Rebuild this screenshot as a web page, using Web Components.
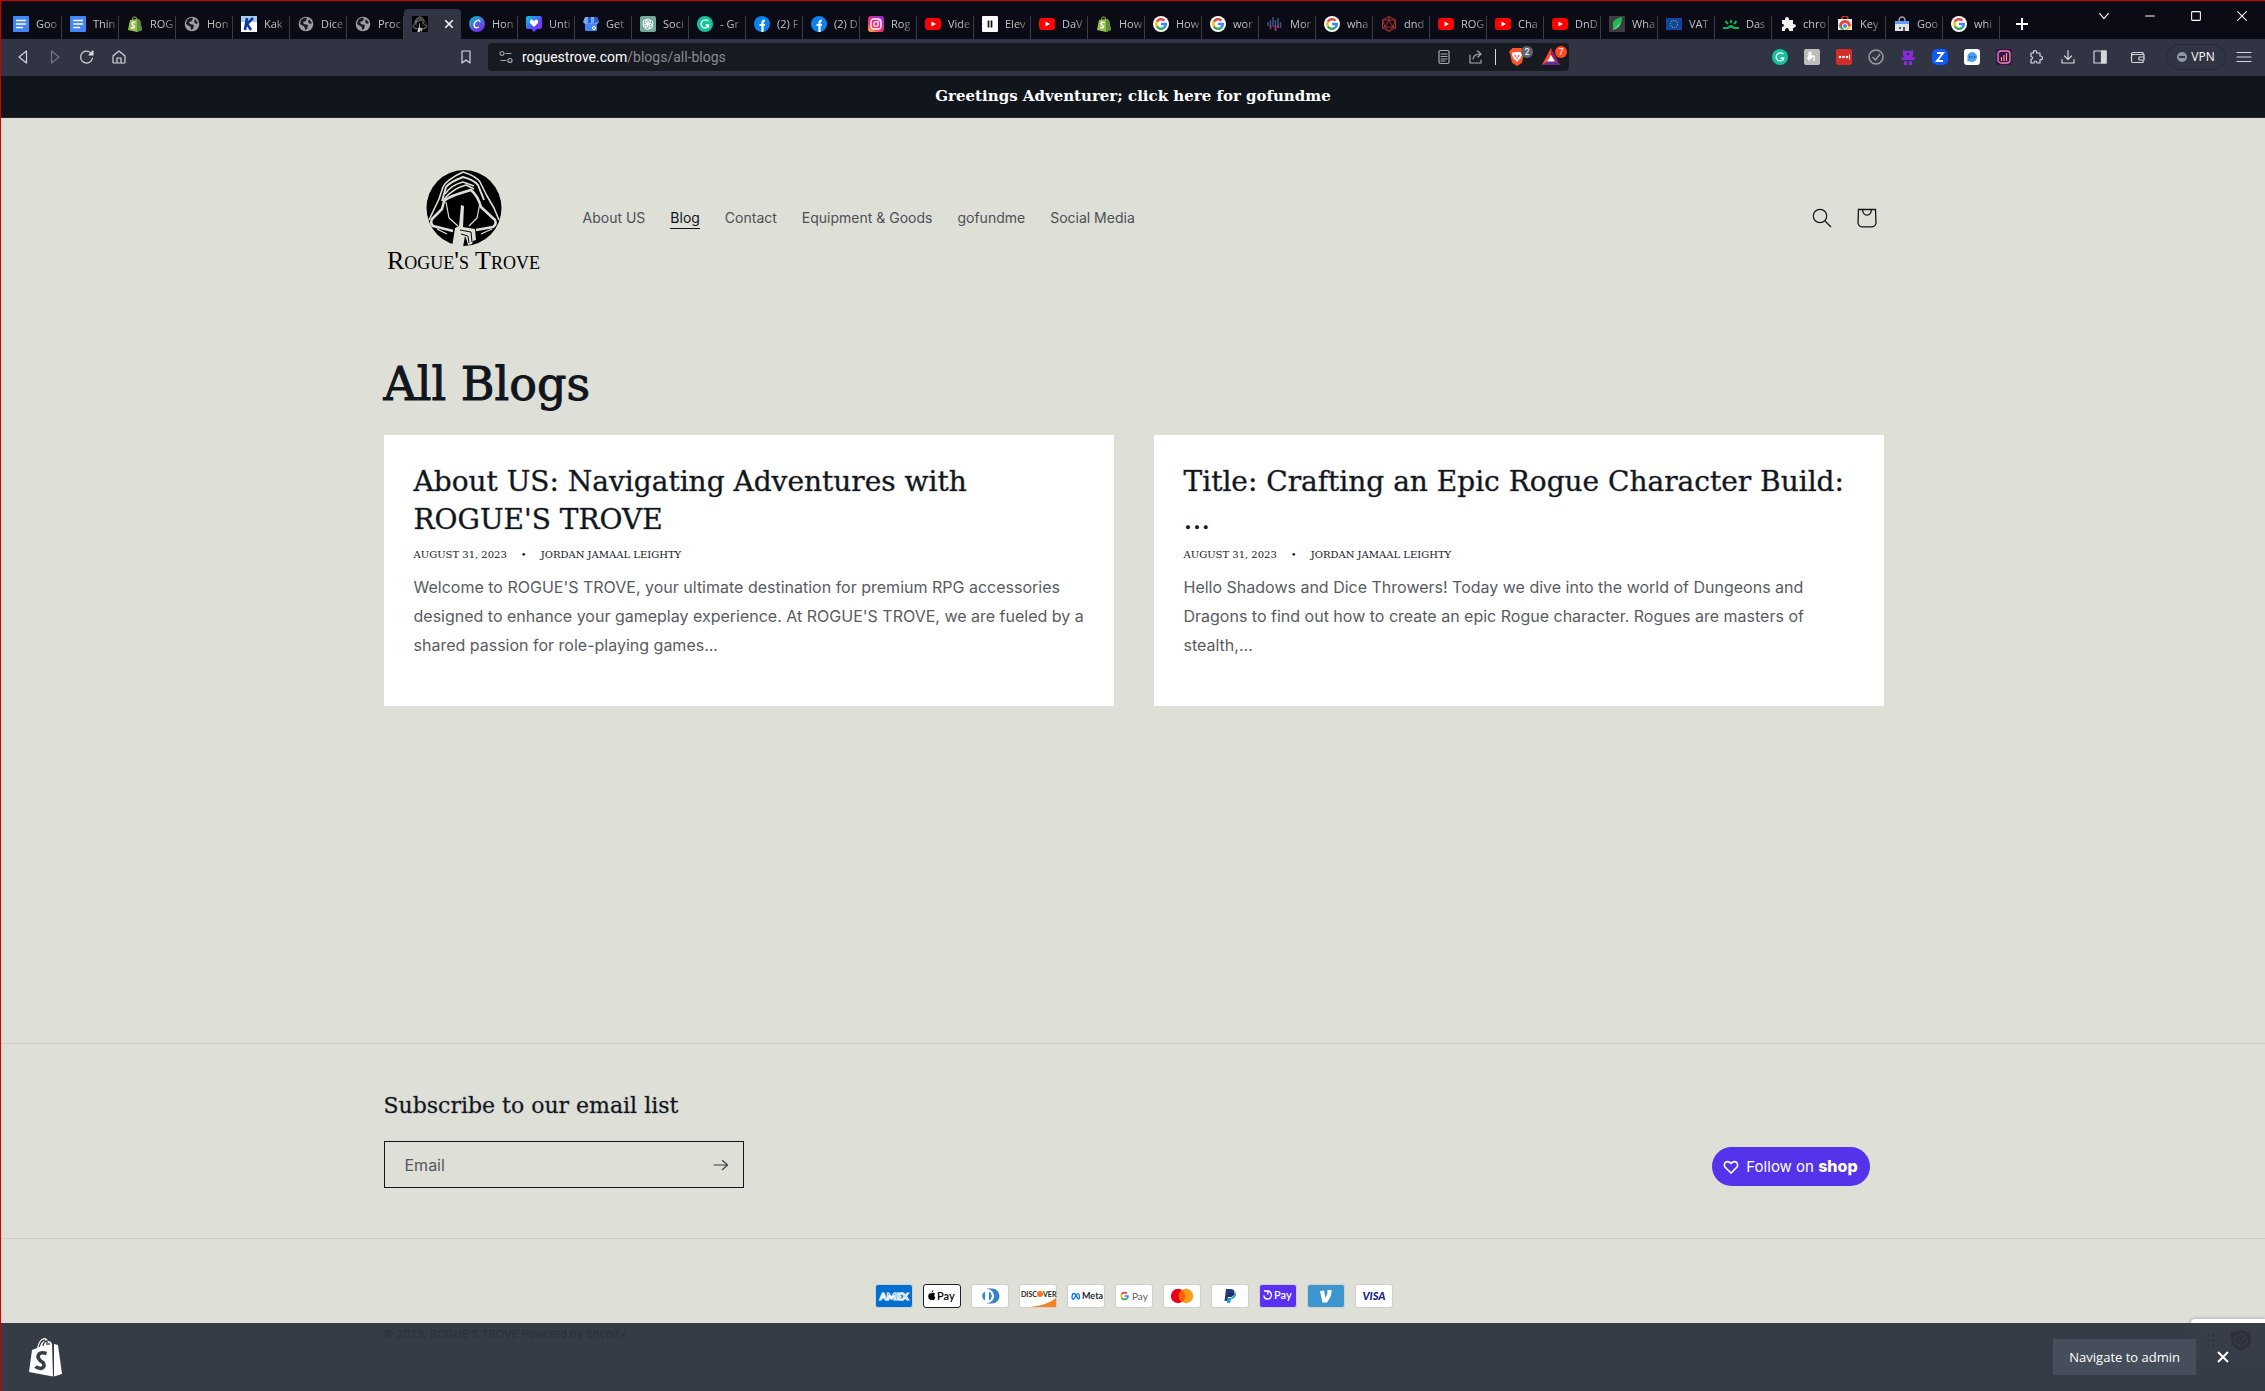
<!DOCTYPE html>
<html lang="en">
<head>
  <meta charset="utf-8">
  <title>All Blogs – ROGUE'S TROVE</title>
  <style>
    body {
      margin: 0;
      background: #dedfd7;
      color: #11161d;
      font-family: Inter, "Liberation Sans", sans-serif;
      overflow-x: hidden;
    }
  </style>
</head>
<body>
  <browser-page>
    <browser-tabs slot="chrome"></browser-tabs>
    <browser-toolbar slot="chrome"></browser-toolbar>
    <announcement-bar slot="chrome">Greetings Adventurer; click here for gofundme</announcement-bar>
    <site-header></site-header>
    <blog-list heading="All Blogs">
      <article-card>
        <span slot="title">About US: Navigating Adventures with ROGUE'S TROVE</span>
        <span slot="date">August 31, 2023</span>
        <span slot="author">Jordan Jamaal Leighty</span>
        Welcome to ROGUE'S TROVE, your ultimate destination for premium RPG accessories designed to enhance your gameplay experience. At ROGUE'S TROVE, we are fueled by a shared passion for role-playing games...
      </article-card>
      <article-card>
        <span slot="title">Title: Crafting an Epic Rogue Character Build: ...</span>
        <span slot="date">August 31, 2023</span>
        <span slot="author">Jordan Jamaal Leighty</span>
        Hello Shadows and Dice Throwers! Today we dive into the world of Dungeons and Dragons to find out how to create an epic Rogue character. Rogues are masters of stealth,...
      </article-card>
    </blog-list>
    <site-footer slot="footer"></site-footer>
  </browser-page>
  <trust-widget></trust-widget>
  <admin-bar></admin-bar>

  <script>
    const svg = (body, box = 16, attrs = "") =>
      `<svg viewBox="0 0 ${box} ${box}" ${attrs}>${body}</svg>`;
    const line = (body, box = 16) =>
      svg(body, box, 'fill="none" stroke="currentColor" stroke-width="1.2" stroke-linejoin="round" stroke-linecap="round"');

    const hood = `
      <ellipse cx="38" cy="38" rx="37.500" ry="38" fill="#000"/>
      <g fill="none" stroke="var(--paper, #dedfd7)" stroke-linejoin="round">
        <path d="M3 50L13 29L17 17Q20 10 37 2Q50 6 54 12L61 26L68 38L73 50" stroke-width="1.600"/>
        <path d="M16 31L20 17Q24 12 37 7Q48 10 52 15L58 30" stroke-width="2"/>
        <path d="M19 24Q25 15 37 12L48 16M19 28Q28 18 40 15L48 19" stroke-width="1.500"/>
        <path d="M18 31Q23 26 45 20Q52 26 55 37L69 50Q71 54 67 57L50 60M19 28Q17 35 16 39L6 49Q4 53 7 56L27 61" stroke-width="2.500"/>
        <path d="M20 32L23 48L32 56M54 33L51 48L43 56" stroke-width="1.200"/>
        <path d="M11 59L21 64M66 59L55 64" stroke-width="1.300"/>
      </g>
      <path d="M35 35L38 36L37 57L49 59L50 70L47 71L46 74L42 75L40 68L39 66L37 77H26L29 58L33 56Z" fill="var(--paper, #dedfd7)"/>
      <path d="M34 60L45 62L46 72M35 64L42 66L43 73" fill="none" stroke="#000" stroke-width="1"/>`;

    const shopBag = (fill, letter) => `
      <path d="M3 4L10 3L13 4L15 14L10 16L1 14Z" fill="${fill}"/>
      <path d="M5 4Q6 0 8 1Q10 1 10 4" fill="none" stroke="${fill}"/>
      <path d="M10 3L13 4L15 14L10 16Z" fill="#5e8e3e"/>
      <path d="M8.500 6.500Q5 5.500 5 7.800Q5.500 9.500 7.500 10.200Q7.500 12.600 4 11.500" fill="none" stroke="${letter}" stroke-width="1.500"/>`;

    const ICONS = {
      docs: svg('<rect width="16" height="16" rx="1" fill="#4285f4"/><path d="M3 4.500h10M3 8h10M3 11.500h7" stroke="#fff" stroke-width="1.600"/>'),
      shopify: svg(shopBag("#95bf47", "#fff")),
      globe: svg('<circle cx="8" cy="8" r="7.300" fill="#9a9da3"/><path d="M3 4Q6 1 9 2L8 5L5 6L6 8L10 9L9 13L7 14Q7 10 5 10L2 8Z" fill="#1a1b24"/><path d="M11 3L14 7L12 8L10 6Z" fill="#1a1b24"/>'),
      k: svg('<rect width="16" height="16" fill="#fff"/><rect width="16" height="6" fill="#a8cdf8"/><path d="M6 2L4 14M12 2L6 8L10 14" stroke="#123a9e" stroke-width="2.600" fill="none"/>'),
      rogue: `<svg viewBox="0 0 76 77" style="--paper:#d8d8d8"><rect width="76" height="77" fill="#000"/>${hood}</svg>`,
      canva: svg('<defs><linearGradient id="a" x1="0" y1="0" x2=".6" y2="1"><stop stop-color="#00c4cc"/><stop offset="1" stop-color="#7d2ae8"/></linearGradient></defs><circle cx="8" cy="8" r="8" fill="url(#a)"/><path d="M11 6Q10.500 3.500 8 4.500Q5 6 5 9.500Q6 13 10 11" fill="none" stroke="#fff" stroke-width="1.300"/>'),
      heart: svg('<defs><linearGradient id="b" x1="0" y1="0" x2="1" y2="1"><stop stop-color="#00d2d5"/><stop offset=".6" stop-color="#5a45ff"/><stop offset="1" stop-color="#a01ee8"/></linearGradient></defs><path d="M2 0H14Q16 0 16 2V11Q16 13 13 13H11L8 16L5 13H3Q0 13 0 11V2Q0 0 2 0Z" fill="url(#b)"/><path d="M8 11L4 7Q3 3.500 6 3.500L8 5L10 3.500Q13 3.500 12 7Z" fill="#fff"/>'),
      store: svg('<path d="M2 6H14V14Q14 15 13 15H3Q2 15 2 14Z" fill="#4285f4"/><path d="M2 1H14L16 6Q15 8 13 8Q11 8 10.500 6Q10 8 8 8Q6 8 5.500 6Q5 8 3 8Q1 8 0 6Z" fill="#78a9f8"/><path d="M5 1h3v6H5M11 1h3l2 5l-5 1" fill="#2a5fc8"/><circle cx="11" cy="12" r="1.500" fill="none" stroke="#fff"/>'),
      gpt: svg('<rect width="16" height="16" rx="2" fill="#74aa9c"/><g fill="none" stroke="#fff"><circle cx="8" cy="5.500" r="2.500"/><circle cx="10.500" cy="7" r="2.500"/><circle cx="10" cy="10" r="2.500"/><circle cx="7.500" cy="11" r="2.500"/><circle cx="5.500" cy="9" r="2.500"/><circle cx="5.500" cy="6.500" r="2.500"/></g>'),
      grammarly: svg('<circle cx="8" cy="8" r="8" fill="#15c39a"/><path d="M11.500 5Q8 2.500 5 5.500Q3 9 6 11.500Q10 13 11.500 9H8.500M11.500 8.500v3" fill="none" stroke="#fff" stroke-width="1.300"/>'),
      facebook: svg('<circle cx="8" cy="8" r="8" fill="#0c82ee"/><path d="M8.500 16V7Q8.500 4.500 11 4.500M5.500 9H11" fill="none" stroke="#fff" stroke-width="2.200"/>'),
      instagram: svg('<defs><linearGradient id="c" x1="0" y1="1" x2=".8" y2="0"><stop stop-color="#ffc93c"/><stop offset=".4" stop-color="#ff2b6d"/><stop offset="1" stop-color="#a626e0"/></linearGradient></defs><rect width="16" height="16" rx="3" fill="url(#c)"/><rect x="3" y="3" width="10" height="10" rx="3" fill="none" stroke="#fff" stroke-width="1.300"/><circle cx="8" cy="8" r="2.300" fill="none" stroke="#fff" stroke-width="1.300"/><circle cx="11" cy="5" r=".8" fill="#fff"/>'),
      youtube: svg('<rect x="0" y="2" width="16" height="12" rx="3" fill="#f00"/><path d="M6.500 5.500L11 8L6.500 10.500Z" fill="#fff"/>'),
      eleven: svg('<rect width="16" height="16" rx="1" fill="#fff"/><path d="M6.500 4.500v7M9.500 4.500v7" stroke="#111" stroke-width="1.700"/>'),
      google: svg('<g fill="none" stroke-width="2.400"><circle cx="8" cy="8" r="8" fill="#fff"/><path d="M11.500 4.700A4.800 4.800 0 0 0 3.800 5.800" stroke="#ea4335"/><path d="M3.800 5.800A4.800 4.800 0 0 0 3.800 10.300" stroke="#fbbc05"/><path d="M3.800 10.300A4.800 4.800 0 0 0 11 11.800" stroke="#34a853"/><path d="M11 11.800A4.800 4.800 0 0 0 12.800 8H8" stroke="#4285f4"/></g>'),
      mono: svg('<path d="M1 6v4M3.500 4v7M6 1v10M8.500 4v11M11 2v10M13.500 6v6" stroke="#36587f" stroke-width="1.500"/><path d="M3.500 9v4M8.500 9v6M11 9v3" stroke="#a9396b" stroke-width="1.500"/>'),
      dice: svg('<g fill="none" stroke="#a8322a"><path d="M8 .500L14.500 4V12L8 15.500L1.500 12V4ZM8 4L12 11H4ZM8 .500V4M1.500 4L4 11L8 15.500L12 11L14.500 4L8 4L1.500 4M1.500 12L4 11M14.500 12L12 11"/></g>'),
      leaf: svg('<rect width="16" height="16" fill="#3b3d42"/><path d="M4 14V6Q6 3 13 1Q14 9 4 14Z" fill="#1db954"/><path d="M4 14L12 6Q11 12 4 14" fill="#6fdc88"/>'),
      eu: svg('<rect y="2" width="16" height="12" fill="#0e47a1"/><circle cx="8" cy="8" r="3.600" fill="none" stroke="#c8b53c" stroke-dasharray="1.200 1"/>'),
      sun: svg('<path d="M0 12H5Q8 8 11 12H16M8 4V7M2.500 5L5 8M13.500 5L11 8" stroke="#12b05a" stroke-width="2" fill="none"/><path d="M5 12Q8 8 11 12Z" fill="#12b05a"/>'),
      puzzle: svg('<path d="M2 4H5Q5 1 7 1Q9 1 9 4H13V8Q16 8 16 10Q15 12 13 12V15H9Q9 12 7 12Q5 12 5 15H2V11Q4 11 4 9Q4 8 2 8Z" fill="#f1f1f1"/>'),
      keyword: svg('<path d="M1 3H15V14H1Z" fill="#eee"/><path d="M5 3Q5 0 8 0Q11 0 11 3" fill="none" stroke="#d93025" stroke-width="1.500"/><path d="M2 10A6 6 0 0 1 14 10Z" fill="#ea4335"/><path d="M2 10Q3 14 7 14L8 10Z" fill="#34a853"/><path d="M14 10Q13 14 8 14L8 10Z" fill="#fbbc05"/><circle cx="8" cy="10" r="2.500" fill="#4285f4" stroke="#fff"/>'),
      webstore: svg('<path d="M1 5H15V15H1Z" fill="#dfe3e8"/><path d="M5 5Q5 1 8 1Q11 1 11 5" fill="none" stroke="#9aa0a6" stroke-width="1.500"/><path d="M1 5H15V8H1Z" fill="#5d9df5"/><path d="M5 11h2v2H5M9 11h2v4H9" fill="#555"/>'),

      back: line('<path d="M11.500 2V14L4 8Z"/>'),
      forward: line('<path d="M4.500 2V14L12 8Z"/>'),
      reload: line('<path d="M13.500 9A6 6 0 1 1 11.500 3.500L13.500 5.500"/><path d="M14 2v4h-4Z" fill="currentColor"/>'),
      home: line('<path d="M2 7L8 2L14 7V13Q14 14 13 14H3Q2 14 2 13ZM6 14V9H10V14"/>'),
      bookmark: line('<path d="M4 2H12V14L8 11L4 14Z"/>'),
      tune: line('<circle cx="4" cy="4.500" r="2"/><path d="M8 4.500H13M3 11.500H8"/><circle cx="12" cy="11.500" r="2"/>'),
      reader: line('<rect x="3" y="1.500" width="10" height="13" rx="1.500"/><path d="M5 5H11M5 7.500H11M5 10H11M5 12H9"/>'),
      share: line('<path d="M2 6V14H13V11M5 10Q6 5 12 5M9.500 2L13 5L10 8"/>'),
      brave: svg('<path d="M4 0H12L15 3L14 6L12.500 13L8 16L3.500 13L2 6L1 3Z" fill="#fb542b"/><path d="M4 4L6.500 3.500H9.500L12 4L12.500 6L11 9L8 12.500L5 9L3.500 6Z" fill="#fff"/><path d="M6 6L7 8M10 6L9 8M8 8V10" stroke="#fb542b"/>'),
      bat: svg('<path d="M8 0L16 15H0Z" fill="#9e1f63"/><path d="M8 0L0 15L8 11Z" fill="#ff4724"/><path d="M0 15H16L8 10Z" fill="#662d91"/><path d="M8 6L11.500 12H4.500Z" fill="#fff"/>'),
      honey: svg('<rect width="16" height="16" rx="2" fill="#bdbdbd"/><path d="M5 12V4Q7 2 7 5Q7 8 5 9Q11 5 10 9V12M3 9H8" fill="none" stroke="#fff" stroke-width="1.400"/>'),
      lastpass: svg('<rect width="16" height="16" rx="2" fill="#d32d27"/><g fill="#fff"><circle cx="4" cy="8" r="1.300"/><circle cx="7.500" cy="8" r="1.300"/><circle cx="11" cy="8" r="1.300"/><path d="M13 5.500h1v5h-1z"/></g>'),
      check: svg('<g fill="none" stroke="#9b9ca4" stroke-width="1.500"><circle cx="8" cy="8" r="7"/><path d="M4.500 8L7.500 11L12 5"/></g>'),
      monster: svg('<path d="M3 0L5 2H11L13 0L13 7L11 9H5L3 7ZM1 8L5 9V11H2ZM15 8L11 9V11H14ZM5 8H11V11H5ZM4 12H7V16H4ZM9 12H12V16H9Z" fill="#8a2be2"/><circle cx="8" cy="5" r="1.500" fill="#31343f"/>'),
      zed: svg('<rect width="16" height="16" rx="5" fill="#0b5cff"/><path d="M5 4H11L5 12H11" fill="none" stroke="#fff" stroke-width="2"/>'),
      chat: svg('<rect width="16" height="16" rx="3" fill="#fff"/><path d="M8 3A5 5 0 1 1 5 12L3.500 13V9A5 5 0 0 1 8 3Z" fill="#4a9df0"/><path d="M5 8h1.300M7.500 8h1.300M10 8h1.300" stroke="#1c4f9c" stroke-width="1.300"/>'),
      chart: svg('<rect width="16" height="16" rx="2" fill="#3a1150"/><rect x="2" y="2" width="12" height="12" rx="3" fill="none" stroke="#f08bb0" stroke-width="1.300"/><path d="M5.500 8v4M8 6v6M10.500 4v8" stroke="#ffa06a" stroke-width="1.200"/>'),
      ext: line('<path d="M3 4H5.500Q5 1.500 7 1.500Q9 1.500 8.500 4H12V7Q14.500 7 14.500 9Q14.500 11 12 10.500V14H9Q9 12 7.500 12Q6 12 6 14H3V10.500Q4.500 10 4.500 9Q4.500 7.500 3 7.500Z"/>'),
      download: line('<path d="M8 1.500V10M4.500 7L8 10.500L11.500 7M2 10.500V14H14V10.500"/>'),
      sidebar: line('<rect x="2" y="2" width="12" height="12"/><path d="M9.500 2h4.500v12h-4.500z" fill="currentColor"/>'),
      wallet: line('<path d="M13 5V3.500H3Q1.500 3.500 1.500 5V12Q1.500 13.500 3 13.500H13V11M1.500 5Q2 6 4 5.500H14V11H9V8H14"/>'),
      menu: line('<path d="M1 3.500H15M1 8H15M1 12.500H15"/>'),
      plus: svg('<path d="M8 2V14M2 8H14" stroke="#fff" stroke-width="2"/>'),
      down: line('<path d="M3 5L8 11L13 5"/>'),
      min: line('<path d="M3 8H13"/>'),
      max: line('<rect x="3" y="3" width="10" height="10" rx="1"/>'),
      close: line('<path d="M3 3L13 13M13 3L3 13"/>'),
      closeBold: svg('<path d="M3 3L13 13M13 3L3 13" stroke="#fff" stroke-width="2"/>'),

      search: svg('<g fill="none" stroke="#11161d" stroke-width="1.200"><circle cx="8" cy="8" r="6.700"/><path d="M13 13L19 19"/></g>', 20),
      bag: svg('<g fill="none" stroke="#11161d" stroke-width="1.300"><path d="M1.500 1.500H18.500L19 15Q18.500 18.500 15 18.800H5Q1.500 18.500 1 15Z"/><path d="M5.500 1.500Q6 7 10 7.200Q14 7 14.500 1.500"/></g>', 20),
      arrow: line('<path d="M1 8H14.500M9.500 3.500L14.500 8L9.500 12.500"/>'),
      like: svg('<path d="M8 14L2 8Q.500 5.500 2.500 3.200Q5.500 1.500 8 4.500Q10.500 1.500 13.500 3.200Q15.500 5.500 14 8Z" fill="none" stroke="#fff" stroke-width="1.600"/>'),
      shopifyWhite: `<svg viewBox="0 0 34 40"><path d="M3 13L8 11Q10 2 15 1Q18 1 19 4Q22 4 23 7L24 39.500L0 35Z" fill="#fff"/><path d="M25 7L29 8L33 37L25 39.500Z" fill="#fff"/><path d="M10 10Q12 3 16 3M14 9Q15 4 18 4L18 8M20 8V6" fill="none" stroke="#363d47" stroke-width="1.300"/><path d="M17.500 16.500Q9.500 14 9 20Q9.500 23 14 25.500Q17 30 12 31.500Q8 31 6.500 29.500" fill="none" stroke="#363d47" stroke-width="3.600"/></svg>`,
      shield: svg('<path d="M10 0L20 3V10Q19 18 10 21Q1 18 0 10V3Z" fill="#5a1400"/><circle cx="10" cy="10" r="6" fill="none" stroke="#ddd" stroke-width="1.500"/><path d="M7 10L9.500 12.500L14 7" fill="none" stroke="#ddd" stroke-width="1.500"/>', 21),
    };

    class AppIcon extends HTMLElement {
      connectedCallback() {
        this.attachShadow({ mode: "open" }).innerHTML = `
          <style>
            :host { display: block; flex: none; width: 16px; height: 16px; }
            svg { display: block; width: 100%; height: 100%; }
          </style>
          ${ICONS[this.getAttribute("name")]}`;
      }
    }
    customElements.define("app-icon", AppIcon);

    // Whole page: browser chrome on top, footer pushed to the bottom
    class BrowserPage extends HTMLElement {
      constructor() {
        super();
        this.attachShadow({ mode: "open" }).innerHTML = `
          <style>
            :host {
              display: flex;
              flex-direction: column;
              box-sizing: border-box;
              min-height: 100vh;
              border-top: 1px solid #d00000;
              border-left: 1px solid #d00000;
            }
            main { flex: 1; padding-left: 1px; }
          </style>
          <slot name="chrome"></slot>
          <main><slot></slot></main>
          <slot name="footer"></slot>`;
      }
    }
    customElements.define("browser-page", BrowserPage);

    const TABS = [
      ["docs", "Goo"], ["docs", "Thin"], ["shopify", "ROG"], ["globe", "Hon"],
      ["k", "Kak"], ["globe", "Dice"], ["globe", "Proc"], ["rogue", ""],
      ["canva", "Hon"], ["heart", "Unti"], ["store", "Get"], ["gpt", "Soci"],
      ["grammarly", "- Gr"], ["facebook", "(2) F"], ["facebook", "(2) D"], ["instagram", "Rog"],
      ["youtube", "Vide"], ["eleven", "Elev"], ["youtube", "DaV"], ["shopify", "How"],
      ["google", "How"], ["google", "wor"], ["mono", "Mor"], ["google", "wha"],
      ["dice", "dnd"], ["youtube", "ROG"], ["youtube", "Cha"], ["youtube", "DnD"],
      ["leaf", "Wha"], ["eu", "VAT"], ["sun", "Das"], ["puzzle", "chro"],
      ["keyword", "Key"], ["webstore", "Goo"], ["google", "whi"],
    ];

    class BrowserTabs extends HTMLElement {
      constructor() {
        super();
        const tabs = TABS.map(([icon, title]) =>
          icon === "rogue"
            ? `<div class="tab active"><app-icon name="rogue"></app-icon><button aria-label="Close tab"><app-icon name="closeBold"></app-icon></button></div>`
            : `<div class="tab"><app-icon name="${icon}"></app-icon><span>${title}</span></div>`).join("");
        this.attachShadow({ mode: "open" }).innerHTML = `
          <style>
            :host {
              display: flex;
              height: 38px;
              padding-left: 4px;
              background: #0a0b14;
              color: #fff;
              font: 11px/16px "Open Sans", sans-serif;
            }
            .tab {
              box-sizing: border-box;
              display: flex;
              align-items: center;
              gap: 7px;
              width: 57px;
              height: 23px;
              margin-top: 15px;
              padding: 0 0 7px 8px;
              border-right: 1px solid #3b3c44;
            }
            .tab span {
              white-space: nowrap;
              color: #c3c4c8;
              -webkit-mask-image: linear-gradient(90deg, #000 60%, rgba(0, 0, 0, 0.4));
              mask-image: linear-gradient(90deg, #000 60%, rgba(0, 0, 0, 0.4));
            }
            .active {
              height: 30px;
              margin-top: 8px;
              padding: 7px 4px 7px 8px;
              background: #313443;
              border: 0;
              border-radius: 4px 4px 0 0;
              justify-content: space-between;
            }
            button { padding: 0; border: 0; background: none; color: inherit; }
            .active button { padding: 0 2px; }
            .active button app-icon { width: 12px; height: 12px; }
            .new { width: 44px; height: 31px; display: grid; place-items: end center; }
            .window { display: flex; margin-left: auto; }
            .window button { width: 46px; height: 29px; display: grid; place-items: center; }
            .window app-icon { width: 14px; height: 14px; }
          </style>
          ${tabs}
          <button class="new" aria-label="New tab"><app-icon name="plus"></app-icon></button>
          <div class="window">
            <button aria-label="Search tabs"><app-icon name="down"></app-icon></button>
            <button aria-label="Minimize"><app-icon name="min"></app-icon></button>
            <button aria-label="Maximize"><app-icon name="max"></app-icon></button>
            <button aria-label="Close"><app-icon name="close"></app-icon></button>
          </div>`;
      }
    }
    customElements.define("browser-tabs", BrowserTabs);

    const toolButton = (name, label = name) =>
      `<button class="tool ${name}" aria-label="${label}"><app-icon name="${name}"></app-icon></button>`;

    class BrowserToolbar extends HTMLElement {
      constructor() {
        super();
        const extensions = ["grammarly", "honey", "lastpass", "check", "monster", "zed", "chat", "chart", "ext", "download", "sidebar"];
        this.attachShadow({ mode: "open" }).innerHTML = `
          <style>
            :host {
              display: grid;
              grid-template-columns: 487px 1fr 696px;
              align-items: center;
              box-sizing: border-box;
              height: 37px;
              padding-bottom: 1px;
              background: #313443;
              color: #d5d6dc;
              font: 14px/20px Roboto, sans-serif;
            }
            .left, .right, .address { display: flex; align-items: center; }
            .left { padding: 0 6px; }
            .right { justify-content: flex-end; padding-right: 5px; }
            .tool {
              display: grid;
              place-items: center;
              width: 32px;
              height: 28px;
              padding: 0;
              border: 0;
              background: none;
              color: inherit;
            }
            .forward { color: #747682; }
            .bookmark { margin-left: auto; }
            .address { height: 28px; padding: 0 2px; border-radius: 4px; background: #171a21; }
            .tune, .reader, .share { color: #a5a8ae; }
            .url { flex: 1; color: #888b92; text-decoration: none; }
            .url b { color: #fff; font-weight: 400; }
            .bar { width: 1px; height: 16px; margin: 0 3px; background: #d5d6dc; }
            .badge-wrap { position: relative; margin-left: 2px; }
            .brave app-icon, .bat app-icon { width: 18px; height: 18px; }
            .badge {
              position: absolute;
              top: 3px;
              right: 0;
              width: 12px;
              height: 12px;
              border-radius: 6px;
              background: #5f6470;
              color: #fff;
              font-size: 9px;
              line-height: 12px;
              text-align: center;
            }
            .hot { background: #ff4a25; }
            .wallet { margin: 0 12px 0 6px; }
            .vpn {
              display: flex;
              align-items: center;
              justify-content: center;
              gap: 4px;
              width: 60px;
              height: 26px;
              margin-right: 2px;
              padding: 0;
              border: 1px solid #262935;
              border-radius: 13px;
              background: none;
              color: #fff;
              font: 12px/16px "Open Sans", sans-serif;
            }
            .vpn i {
              display: grid;
              place-items: center;
              width: 10px;
              height: 10px;
              border-radius: 5px;
              background: #9094ab;
            }
            .vpn i::before { content: ""; width: 6px; height: 2px; background: #313443; }
          </style>
          <div class="left">
            ${toolButton("back")}${toolButton("forward")}${toolButton("reload")}${toolButton("home")}${toolButton("bookmark")}
          </div>
          <div class="address">
            ${toolButton("tune", "Site settings")}
            <a class="url" href="#"><b>roguestrove.com</b>/blogs/all-blogs</a>
            ${toolButton("reader")}${toolButton("share")}
            <span class="bar"></span>
            <div class="badge-wrap">${toolButton("brave")}<span class="badge">2</span></div>
            <div class="badge-wrap">${toolButton("bat", "Rewards")}<span class="badge hot">7</span></div>
          </div>
          <div class="right">
            ${extensions.map((name) => toolButton(name)).join("")}
            ${toolButton("wallet")}
            <button class="vpn"><i></i>VPN</button>
            ${toolButton("menu")}
          </div>`;
      }
    }
    customElements.define("browser-toolbar", BrowserToolbar);

    class AnnouncementBar extends HTMLElement {
      constructor() {
        super();
        this.attachShadow({ mode: "open" }).innerHTML = `
          <style>
            :host { display: block; background: #11161d; border-bottom: 1px solid #2c2228; }
            a {
              display: block;
              padding: 8px 0;
              color: #fff;
              font: bold 15px/25px "DejaVu Serif", serif;
              text-align: center;
              text-decoration: none;
            }
          </style>
          <a href="#"><slot></slot></a>`;
      }
    }
    customElements.define("announcement-bar", AnnouncementBar);

    class SiteHeader extends HTMLElement {
      constructor() {
        super();
        const links = ["About US", "Blog", "Contact", "Equipment &amp; Goods", "gofundme", "Social Media"];
        this.attachShadow({ mode: "open" }).innerHTML = `
          <style>
            :host {
              display: flex;
              align-items: center;
              box-sizing: border-box;
              max-width: 1500px;
              height: 200px;
              margin: 0 auto;
            }
            a { color: inherit; text-decoration: none; }
            .logo {
              display: flex;
              flex-direction: column;
              align-items: center;
              width: 160px;
              padding-top: 8px;
              color: #000;
              font: small-caps 26px/28px "Liberation Serif", serif;
              white-space: nowrap;
            }
            .logo svg { width: 76px; height: 77px; }
            nav { display: flex; gap: 25px; margin-left: 39px; color: #4c5055; font-size: 14px; line-height: 20px; }
            nav a { border-bottom: 1px solid transparent; }
            nav a:nth-child(2) { color: #11161d; border-color: #11161d; }
            .tools { display: flex; margin-left: auto; margin-right: -6px; }
            button { display: grid; place-items: center; width: 45px; height: 44px; padding: 0; border: 0; background: none; }
            .tools app-icon { width: 20px; height: 20px; }
          </style>
          <a class="logo" href="#"><svg viewBox="0 0 76 77">${hood}</svg>Rogue's Trove</a>
          <nav>${links.map((text) => `<a href="#">${text}</a>`).join("")}</nav>
          <div class="tools">
            <button aria-label="Search"><app-icon name="search"></app-icon></button>
            <button aria-label="Cart"><app-icon name="bag"></app-icon></button>
          </div>`;
      }
    }
    customElements.define("site-header", SiteHeader);

    class BlogList extends HTMLElement {
      constructor() {
        super();
        this.attachShadow({ mode: "open" }).innerHTML = `
          <style>
            :host { display: block; max-width: 1500px; margin: 0 auto; padding: 36px 0; }
            h1 { margin: 0 0 21px; font: 46px/60px "DejaVu Serif", serif; -webkit-text-stroke: 1px; }
            .cards { display: grid; grid-template-columns: 1fr 1fr; gap: 40px; }
          </style>
          <h1>${this.getAttribute("heading")}</h1>
          <div class="cards"><slot></slot></div>`;
      }
    }
    customElements.define("blog-list", BlogList);

    class ArticleCard extends HTMLElement {
      constructor() {
        super();
        this.attachShadow({ mode: "open" }).innerHTML = `
          <style>
            :host { display: block; padding: 28px 20px 46px 30px; background: #fff; }
            h2 { margin: 0 0 8px; font: 28px/38px "DejaVu Serif", serif; -webkit-text-stroke: 1px rgba(17, 22, 29, 0.35); }
            h2 a { color: inherit; text-decoration: none; }
            .meta {
              display: flex;
              gap: 14px;
              margin-bottom: 10px;
              font: 10px/16px "DejaVu Serif", serif;
              text-transform: uppercase;
            }
            p { margin: 0; color: #585c61; font-size: 16px; line-height: 29px; }
          </style>
          <h2><a href="#"><slot name="title"></slot></a></h2>
          <div class="meta"><slot name="date"></slot><span>•</span><slot name="author"></slot></div>
          <p><slot></slot></p>`;
      }
    }
    customElements.define("article-card", ArticleCard);

    // Payment cards are drawn on a 38x24 plate
    const label = (text, x, y, size, fill, extra = "") =>
      `<text x="${x}" y="${y}" font-family="Lato, sans-serif" font-size="${size}" fill="${fill}" ${extra}>${text}</text>`;
    const CARDS = [
      ["#016fd0", label("AMEX", 19, 16, 10, "#016fd0", 'text-anchor="middle" font-weight="900" stroke="#fff" stroke-width="1"')],
      ["#fff", '<path d="M8 9.500Q10 8 12 9.500Q10.500 11.500 12.300 13.500Q11 17 9.500 16Q8.500 15.500 7.500 16Q5 15 5.300 11.500Q6 8.500 8 9.500ZM8.500 8.500Q8.500 6.500 10.500 6Q10.500 8 8.500 8.500Z" fill="#000"/>' + label("Pay", 14, 16, 11, "#000", 'font-weight="600"'), "#222"],
      ["#fff", '<path d="M19 4.500H21A7.500 7.500 0 0 1 21 19.500H16V4.500Z" fill="#3086c8"/><circle cx="16" cy="12" r="7" fill="#fff"/><path d="M14 7.500A5 5 0 0 0 14 16.500ZM18 7.500A5 5 0 0 1 18 16.500Z" fill="#3086c8"/>'],
      ["#fff", '<path d="M11 23Q29 21 37 14V23Z" fill="#f58220"/><circle cx="21" cy="10" r="3" fill="#f47920"/>' + label("DISC", 2, 13, 7, "#222", 'font-weight="700"') + label("VER", 24, 13, 7, "#222", 'font-weight="700"')],
      ["#fff", '<path d="M5 14.500Q5 9 7 9.500Q9 10 11 15Q13 15 12.500 12Q11.500 8 9.500 11L7 15Q5 15.500 5 13" fill="none" stroke="#0075f3" stroke-width="1.300"/>' + label("Meta", 15, 15, 9, "#1c2b33", 'font-weight="700"')],
      ["#fff", '<g fill="none" stroke-width="1.700"><path d="M12 9.500A3.600 3.600 0 0 0 6.500 10.300" stroke="#ea4335"/><path d="M6.500 10.300A3.600 3.600 0 0 0 6.500 13.700" stroke="#fbbc05"/><path d="M6.500 13.700A3.600 3.600 0 0 0 12 14.500" stroke="#34a853"/><path d="M12 14.500Q13 13.500 13 12H9.500" stroke="#4285f4"/></g>' + label("Pay", 17, 16, 10, "#5f6368")],
      ["#fff", '<circle cx="15" cy="12" r="7.200" fill="#eb001b"/><circle cx="23" cy="12" r="7.200" fill="#f79e1b"/><path d="M19 6A7.200 7.200 0 0 1 19 18A7.200 7.200 0 0 1 19 6Z" fill="#ff5f00"/>'],
      ["#fff", '<path d="M15 5H20Q24 5.500 23.500 9Q22.500 13 18.500 13H17L16.500 17H13.500Z" fill="#253b80"/><path d="M24 8Q26 10 24 13Q23 15 20 15L19 19H16L17 14H19Q23 13.500 24 8Z" fill="#179bd7"/><path d="M17.500 9H23.500Q22.500 13 18.500 13H17Z" fill="#222d65"/>'],
      ["#5a31f4", '<path d="M5 7H9.500Q12.500 8 12.500 11Q12 15 8.500 15Q5 15 5 11.500M8.800 7V10.500" fill="none" stroke="#fff" stroke-width="1.400"/>' + label("Pay", 15, 15, 11, "#fff", 'font-weight="600"')],
      ["#3d95ce", '<path d="M13 7L17 6.500L18.500 14Q21 10 20.500 6H24.500Q25 12 20 18.500H15.500Z" fill="#fff"/>'],
      ["#fff", label("VISA", 19, 16, 11, "#142688", 'text-anchor="middle" font-weight="900" font-style="italic"')],
    ];

    class SiteFooter extends HTMLElement {
      constructor() {
        super();
        const cards = CARDS.map(([fill, art, edge]) =>
          `<svg viewBox="0 0 38 24"><rect x=".500" y=".500" width="37" height="23" rx="2.500" fill="${fill}" stroke="${edge || "#cfd0c9"}"/>${art}</svg>`).join("");
        this.attachShadow({ mode: "open" }).innerHTML = `
          <style>
            :host { display: block; }
            section { padding-left: 1px; border-top: 1px solid #cbcdc8; }
            .inner { max-width: 1500px; margin: 0 auto; }
            .top { display: flex; justify-content: space-between; align-items: flex-end; padding: 45px 0 50px; }
            h2 { margin: 0 0 18px; font: 22px/34px "DejaVu Serif", serif; -webkit-text-stroke: 1px rgba(17, 22, 29, 0.25); }
            .field {
              display: flex;
              align-items: center;
              box-sizing: border-box;
              width: 360px;
              height: 47px;
              border: 1px solid #11161d;
            }
            input {
              flex: 1;
              min-width: 0;
              padding: 0 20px;
              border: 0;
              outline: 0;
              background: none;
              font: 16px/24px Inter, sans-serif;
              color: #11161d;
            }
            input::placeholder { color: #55595d; opacity: 1; }
            .field button { display: grid; place-items: center; width: 44px; height: 44px; padding: 0; border: 0; background: none; color: #3b3f46; }
            .follow {
              display: flex;
              align-items: center;
              justify-content: center;
              gap: 7px;
              width: 158px;
              height: 39px;
              margin: 0 14px 2px 0;
              padding: 0;
              border: 0;
              border-radius: 20px;
              background: #5433eb;
              color: #fff;
              font: 15px/20px Inter, sans-serif;
            }
            .follow b { font-size: 16px; font-weight: 800; }
            .pay { display: flex; justify-content: center; gap: 10px; padding: 45px 0 19px; }
            .pay svg { width: 38px; height: 24px; }
            small { display: block; padding-bottom: 50px; font-size: 11px; line-height: 14px; }
            small a { color: inherit; text-decoration: none; }
          </style>
          <section>
            <div class="inner top">
              <form>
                <h2>Subscribe to our email list</h2>
                <div class="field">
                  <input type="email" placeholder="Email" aria-label="Email">
                  <button type="button" aria-label="Subscribe"><app-icon name="arrow"></app-icon></button>
                </div>
              </form>
              <button class="follow"><app-icon name="like"></app-icon><span>Follow on <b>shop</b></span></button>
            </div>
          </section>
          <section>
            <div class="inner">
              <div class="pay">${cards}</div>
              <small>© 2023, <a href="#">ROGUE'S TROVE</a> <a href="#">Powered by Shopify</a></small>
            </div>
          </section>`;
      }
    }
    customElements.define("site-footer", SiteFooter);

    // Floating badge in the corner, partly under the admin bar
    class TrustWidget extends HTMLElement {
      constructor() {
        super();
        this.attachShadow({ mode: "open" }).innerHTML = `
          <style>
            :host {
              position: fixed;
              right: 0;
              bottom: 30px;
              display: flex;
              align-items: center;
              justify-content: space-between;
              box-sizing: border-box;
              width: 74px;
              height: 42px;
              padding: 0 13px 0 15px;
              border-radius: 4px 0 0 0;
              background: #fff;
              box-shadow: 0 0 4px rgba(0, 0, 0, 0.3);
            }
            .dots { width: 10px; height: 15px; background: radial-gradient(circle, #777 1px, transparent 2px) 0 0 / 5px 5px; }
            app-icon { width: 21px; height: 23px; }
          </style>
          <span class="dots"></span>
          <app-icon name="shield"></app-icon>`;
      }
    }
    customElements.define("trust-widget", TrustWidget);

    class AdminBar extends HTMLElement {
      constructor() {
        super();
        this.attachShadow({ mode: "open" }).innerHTML = `
          <style>
            :host {
              position: fixed;
              right: 0;
              bottom: 0;
              left: 1px;
              display: flex;
              align-items: center;
              box-sizing: border-box;
              height: 68px;
              padding: 0 24px 0 28px;
              background: rgba(43, 50, 61, 0.94);
            }
            .bag, .bag app-icon { width: 34px; height: 40px; }
            .admin {
              height: 36px;
              margin-left: auto;
              padding: 0 16px;
              background: #454e5a;
              color: #fff;
              font: 13px/36px "Open Sans", sans-serif;
              text-decoration: none;
            }
            button { display: grid; place-items: center; width: 36px; height: 36px; margin-left: 9px; padding: 0; border: 0; background: none; }
          </style>
          <a class="bag" href="#" aria-label="Shopify"><app-icon name="shopifyWhite"></app-icon></a>
          <a class="admin" href="#">Navigate to admin</a>
          <button aria-label="Close"><app-icon name="closeBold"></app-icon></button>`;
      }
    }
    customElements.define("admin-bar", AdminBar);
  </script>
</body>
</html>
